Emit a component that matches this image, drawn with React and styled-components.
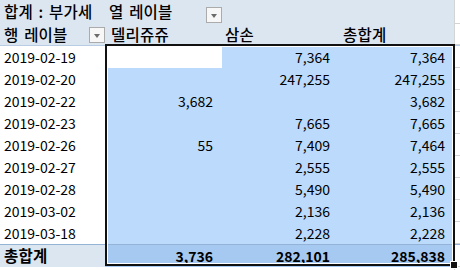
import React from "react";
import styled, { createGlobalStyle } from "styled-components";

const Global = createGlobalStyle`
  html, body { margin: 0; padding: 0; background: #ffffff; }
  body {
    font-family: "Noto Sans CJK KR", "Noto Sans", sans-serif;
    font-size: 14px;
    color: #000000;
  }
`;

const COLS = "105px 117px 117px 115px 1fr";

const Sheet = styled.div`
  position: relative;
  width: 460px;
  height: 270px;
  overflow: hidden;
  background: #ffffff;
`;

const Row = styled.div`
  display: grid;
  grid-template-columns: ${COLS};
  height: ${(p) => p.$h || 22}px;
  box-sizing: border-box;
  border-top: ${(p) => (p.$topLine ? "1px solid #95B3D7" : "none")};
`;

const Cell = styled.div`
  display: flex;
  align-items: center;
  justify-content: ${(p) => (p.$right ? "flex-end" : "flex-start")};
  padding: ${(p) => (p.$right ? "0 9px 0 0" : `0 0 0 ${p.$pl ?? 4}px`)};
  box-sizing: border-box;
  white-space: nowrap;
  overflow: visible;
  line-height: 1;
  font-weight: ${(p) => (p.$bold ? 700 : 400)};
  background: ${(p) =>
    p.$kind === "head"
      ? "#DCE6F1"
      : p.$kind === "sel"
      ? "#BBDAFC"
      : p.$kind === "selTotal"
      ? "#A5C9F1"
      : "#ffffff"};
  position: relative;
`;

const Outside = styled.div`
  background: #ffffff;
  border-left: 1px solid #D4D4D4;
  border-bottom: 1px solid #D4D4D4;
  box-sizing: border-box;
`;

const Label = styled.span`
  position: relative;
  z-index: 1;
  font-size: 15.5px;
  font-weight: ${(p) => (p.$bold ? 700 : 500)};
  letter-spacing: 0.2px;
  word-spacing: 2px;
`;

const DropButton = styled.div`
  position: absolute;
  right: ${(p) => p.$right || 0}px;
  top: ${(p) => p.$top || 3}px;
  width: 16px;
  height: 16px;
  box-sizing: border-box;
  border: 1px solid #ABABAB;
  background: #F7F7F7;
  display: flex;
  align-items: center;
  justify-content: center;
  &::after {
    content: "";
    width: 0;
    height: 0;
    border-left: 3.5px solid transparent;
    border-right: 3.5px solid transparent;
    border-top: 4px solid #6B6B6B;
    margin-top: 1px;
  }
`;

const HeadRow2 = styled(Row)`
  border-bottom: 1px solid #B8CCE4;
`;

const Selection = styled.div`
  position: absolute;
  left: 105px;
  top: 44px;
  width: 350px;
  height: 222px;
  box-sizing: border-box;
  border: 2px solid #111111;
  box-shadow: inset 0 0 0 1px #ffffff;
  pointer-events: none;
  &::after {
    content: "";
    position: absolute;
    right: -5px;
    bottom: -5px;
    width: 6px;
    height: 6px;
    background: #111111;
    border: 1px solid #ffffff;
  }
`;

const data = [
  ["2019-02-19", "", "7,364", "7,364"],
  ["2019-02-20", "", "247,255", "247,255"],
  ["2019-02-22", "3,682", "", "3,682"],
  ["2019-02-23", "", "7,665", "7,665"],
  ["2019-02-26", "55", "7,409", "7,464"],
  ["2019-02-27", "", "2,555", "2,555"],
  ["2019-02-28", "", "5,490", "5,490"],
  ["2019-03-02", "", "2,136", "2,136"],
  ["2019-03-18", "", "2,228", "2,228"],
];

export default function App() {
  return (
    <>
      <Global />
      <Sheet>
        <Row $h={24}>
          <Cell $kind="head">
            <Label>합계 : 부가세</Label>
          </Cell>
          <Cell $kind="head">
            <Label>열 레이블</Label>
            <DropButton $right={0} $top={7} />
          </Cell>
          <Cell $kind="head" />
          <Cell $kind="head" />
          <Outside />
        </Row>
        <HeadRow2 $h={22}>
          <Cell $kind="head">
            <Label>행 레이블</Label>
            <DropButton $right={0} $top={3} />
          </Cell>
          <Cell $kind="head" $pl={6}>
            <Label>델리쥬쥬</Label>
          </Cell>
          <Cell $kind="head" $pl={3}>
            <Label>삼손</Label>
          </Cell>
          <Cell $kind="head">
            <Label>총합계</Label>
          </Cell>
          <Outside />
        </HeadRow2>
        {data.map((r, i) => (
          <Row key={r[0]}>
            <Cell>{r[0]}</Cell>
            <Cell $right $kind={i === 0 ? "plain" : "sel"}>
              {r[1]}
            </Cell>
            <Cell $right $kind="sel">
              {r[2]}
            </Cell>
            <Cell $right $kind="sel">
              {r[3]}
            </Cell>
            <Outside />
          </Row>
        ))}
        <Row $h={23} $topLine>
          <Cell $kind="head">
            <Label $bold>총합계</Label>
          </Cell>
          <Cell $right $bold $kind="selTotal">
            3,736
          </Cell>
          <Cell $right $bold $kind="selTotal">
            282,101
          </Cell>
          <Cell $right $bold $kind="selTotal">
            285,838
          </Cell>
          <Outside />
        </Row>
        <Row>
          <Cell />
          <Cell />
          <Cell />
          <Cell />
          <Outside />
        </Row>
        <Selection />
      </Sheet>
    </>
  );
}
